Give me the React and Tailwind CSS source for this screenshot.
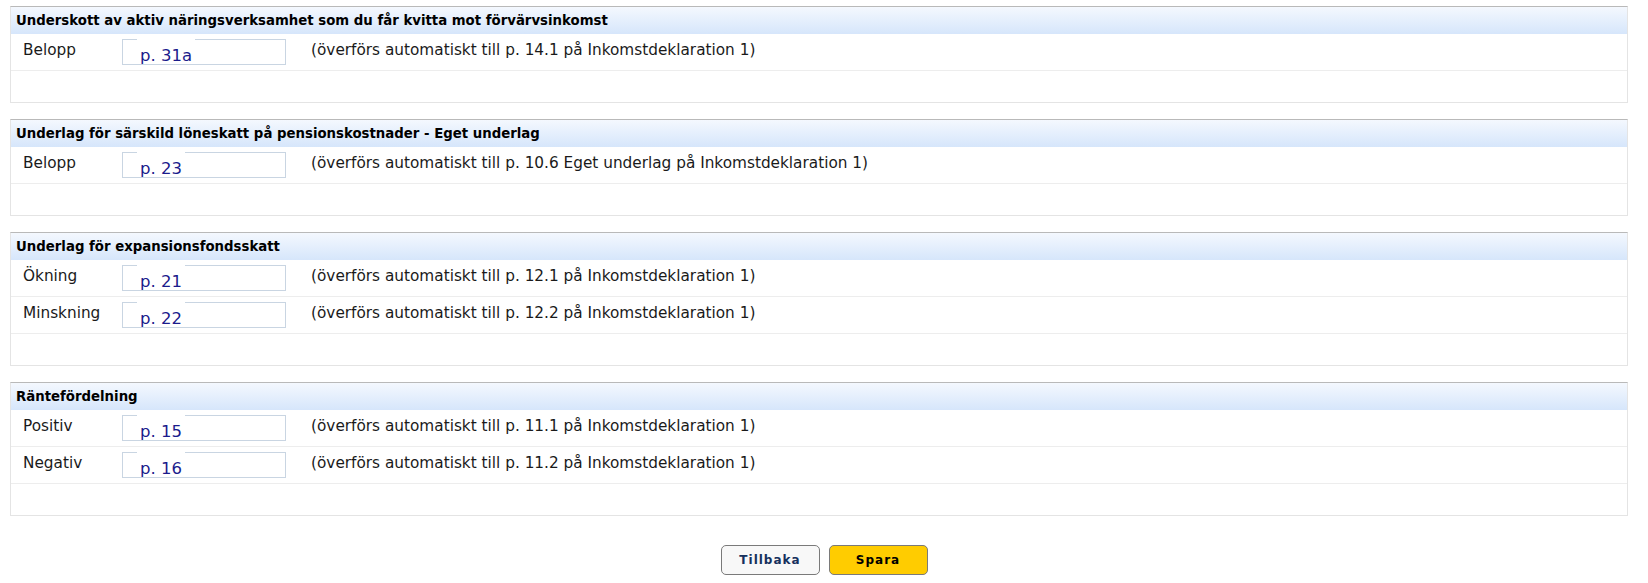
const sections = [
  {
    title: 'Underskott av aktiv näringsverksamhet som du får kvitta mot förvärvsinkomst',
    rows: [{ label: 'Belopp', code: 'p. 31a', note: '(överförs automatiskt till p. 14.1 på Inkomstdeklaration 1)' }],
  },
  {
    title: 'Underlag för särskild löneskatt på pensionskostnader - Eget underlag',
    rows: [{ label: 'Belopp', code: 'p. 23', note: '(överförs automatiskt till p. 10.6 Eget underlag på Inkomstdeklaration 1)' }],
  },
  {
    title: 'Underlag för expansionsfondsskatt',
    rows: [
      { label: 'Ökning', code: 'p. 21', note: '(överförs automatiskt till p. 12.1 på Inkomstdeklaration 1)' },
      { label: 'Minskning', code: 'p. 22', note: '(överförs automatiskt till p. 12.2 på Inkomstdeklaration 1)' },
    ],
  },
  {
    title: 'Räntefördelning',
    rows: [
      { label: 'Positiv', code: 'p. 15', note: '(överförs automatiskt till p. 11.1 på Inkomstdeklaration 1)' },
      { label: 'Negativ', code: 'p. 16', note: '(överförs automatiskt till p. 11.2 på Inkomstdeklaration 1)' },
    ],
  },
]

const Row = ({ label, code, note }) => {
  return (
    <div className="flex items-center h-[37px] border-b border-[#ededed] text-[15.3px] text-[#1a1a1a]">
      <div className="w-[111px] pl-[12px] -mt-[3px]">{label}</div>
      <div className="relative w-[164px] h-[26px] border border-[#c9d5e2] bg-white">
        <span className="absolute left-[14px] -top-[1px] bottom-0 px-[3px] overflow-hidden bg-white text-[16.5px] leading-[33px] text-[#1b1b8c]">
          {code}
        </span>
      </div>
      <div className="ml-[25px] -mt-[3px]">{note}</div>
    </div>
  )
}

const Section = ({ title, rows }) => {
  return (
    <div className="border-t border-[#b9b9b9] border-x border-b border-x-[#e4e4e4] border-b-[#e4e4e4]">
      <div className="h-[27px] flex items-center pl-[5px] bg-gradient-to-b from-[#f4f8fe] to-[#d6e6fb] text-[13.3px] font-bold text-black">
        {title}
      </div>
      {rows.map((r) => (
        <Row key={r.label} {...r} />
      ))}
      <div className="h-[31px]" />
    </div>
  )
}

export default function App() {
  return (
    <div className="w-[1648px] h-[583px] bg-white pt-[6px]" style={{ fontFamily: '"DejaVu Sans", Verdana, sans-serif' }}>
      <div className="ml-[10px] w-[1618px] flex flex-col gap-[16px]">
        {sections.map((s) => (
          <Section key={s.title} {...s} />
        ))}
      </div>
      <div className="flex justify-center gap-[9px] mt-[29px]">
        <button className="w-[99px] h-[30px] rounded-[5px] border border-[#7a7a7a] bg-[#f8f8f8] text-[12px] font-bold tracking-[1px] text-[#16315e]">
          Tillbaka
        </button>
        <button className="w-[99px] h-[30px] rounded-[5px] border border-[#7a7a7a] bg-[#ffcc00] text-[12px] font-bold tracking-[1px] text-black">
          Spara
        </button>
      </div>
    </div>
  )
}
